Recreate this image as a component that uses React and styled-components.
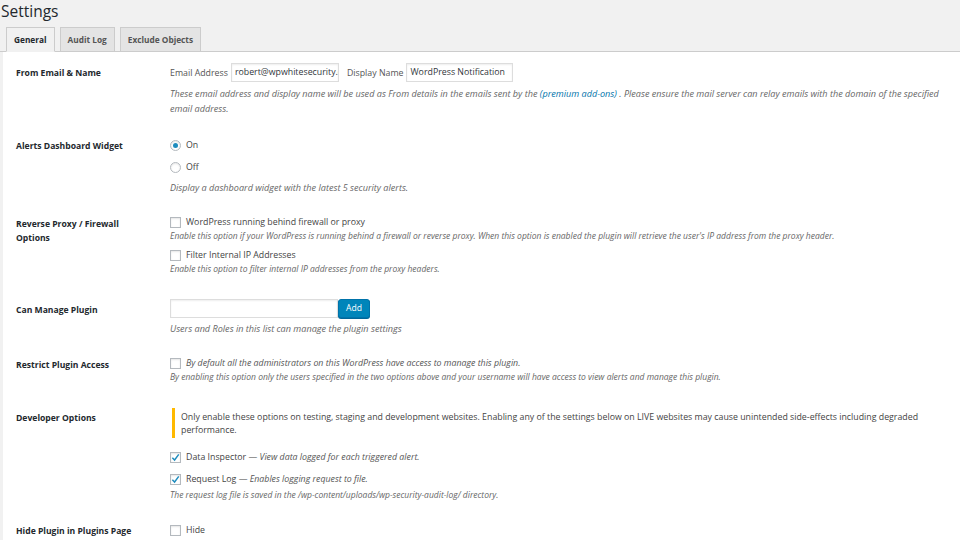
import React from 'react';
import styled, { createGlobalStyle } from 'styled-components';

const GlobalStyle = createGlobalStyle`
    html, body {
        margin: 0;
        padding: 0;
        background: #f1f1f1;
        font-family: "Open Sans", "Noto Sans", sans-serif;
        color: #444;
        overflow: hidden;
    }
`;

const Page = styled.div`
    width: 960px;
    height: 540px;
    overflow: hidden;
`;

const Title = styled.h1`
    margin: 0;
    padding: 0 0 0 1px;
    font-size: 15.5px;
    font-weight: 400;
    line-height: 22px;
    color: #23282d;
`;

const TabBar = styled.div`
    display: flex;
    gap: 5px;
    margin-top: 5px;
    padding-left: 6px;
    border-bottom: 1px solid #ccc;
`;

const Tab = styled.div`
    padding: 0 7px;
    height: 23px;
    line-height: 24px;
    font-size: 8.3px;
    font-weight: 700;
    border: 1px solid #ccc;
    border-bottom: 1px solid ${p => (p.$active ? '#f1f1f1' : '#ccc')};
    margin-bottom: -1px;
    background: ${p => (p.$active ? '#f1f1f1' : '#e4e4e4')};
    color: ${p => (p.$active ? '#23282d' : '#555')};
`;

const Panel = styled.div`
    margin-left: 3px;
    background: #fff;
    padding: 0 10px 0 13px;
    min-height: 500px;
`;

const Row = styled.div`
    display: grid;
    grid-template-columns: 154px 1fr;
    padding-top: ${p => p.$top}px;
`;

const Label = styled.div`
    font-size: 8.6px;
    font-weight: 700;
    color: #23282d;
    line-height: 14px;
    padding-top: ${p => p.$pt || 0}px;
    padding-right: 20px;
`;

const Field = styled.div`
    font-size: 8.8px;
    color: #444;
    min-width: 0;
`;

const Inline = styled.div`
    display: flex;
    align-items: center;
`;

const FieldText = styled.span`
    color: #555;
    margin: 0 3px 0 ${p => p.$ml || 0}px;
`;

const Input = styled.div`
    box-sizing: border-box;
    width: ${p => p.$w}px;
    height: 19px;
    border: 1px solid #ddd;
    box-shadow: inset 0 1px 2px rgba(0, 0, 0, 0.07);
    padding: 0 3px;
    line-height: 17px;
    font-size: 8.8px;
    color: #32373c;
    white-space: nowrap;
    overflow: hidden;
    background: #fff;
`;

const Button = styled.div`
    box-sizing: border-box;
    height: 19px;
    padding: 0 7px;
    line-height: 17px;
    background: #0085ba;
    border: 1px solid #0073aa;
    border-radius: 3px;
    color: #fff;
    font-size: 8.6px;
    box-shadow: 0 1px 0 #006799;
`;

const Desc = styled.p`
    margin: ${p => p.$mt || 0}px 0 0;
    font-size: ${p => (p.$small ? 8.5 : 9.1)}px;
    line-height: ${p => (p.$small ? 13 : 15)}px;
    font-style: italic;
    color: #666;
`;

const Link = styled.span`
    color: #0073aa;
`;

const Option = styled.div`
    display: flex;
    align-items: center;
    gap: 5px;
    height: 14px;
    margin-top: ${p => p.$mt || 0}px;
    color: #444;
    white-space: nowrap;
`;

const Box = styled.span`
    box-sizing: border-box;
    width: 11px;
    height: 11px;
    border: 1px solid #b4b9be;
    box-shadow: inset 0 1px 2px rgba(0, 0, 0, 0.1);
    background: #fff;
    display: inline-flex;
    align-items: center;
    justify-content: center;
    border-radius: ${p => (p.$round ? '50%' : '0')};
    flex: none;
`;

const Dot = styled.span`
    width: 5px;
    height: 5px;
    border-radius: 50%;
    background: #1e8cbe;
`;

const Em = styled.em`
    color: #555;
`;

const Notice = styled.div`
    border-left: 3px solid #ffb900;
    margin-left: 2px;
    padding: 3px 0 1px 6px;
    line-height: 13px;
    font-size: 8.8px;
    color: #444;
`;

const Check = () => (
    <svg width="9" height="9" viewBox="0 0 10 10">
        <path d="M1.5 5.2 L4 7.8 L8.6 1.6" fill="none" stroke="#1e8cbe" strokeWidth="1.6" />
    </svg>
);

const Checkbox = ({ checked }) => <Box>{checked && <Check />}</Box>;
const Radio = ({ checked }) => <Box $round>{checked && <Dot />}</Box>;

const App = () => (
    <Page>
        <GlobalStyle />
        <Title>Settings</Title>
        <TabBar>
            <Tab $active>General</Tab>
            <Tab>Audit Log</Tab>
            <Tab>Exclude Objects</Tab>
        </TabBar>
        <Panel>
            <Row $top={11}>
                <Label $pt={3}>From Email &amp; Name</Label>
                <Field>
                    <Inline>
                        <FieldText>Email Address</FieldText>
                        <Input $w={108}>robert@wpwhitesecurity.com</Input>
                        <FieldText $ml={8}>Display Name</FieldText>
                        <Input $w={107}>WordPress Notification</Input>
                    </Inline>
                    <Desc $mt={4}>
                        These email address and display name will be used as From details in the emails sent by the <Link>(premium add-ons)</Link> . Please ensure the mail server can relay emails with the domain of the specified email address.
                    </Desc>
                </Field>
            </Row>
            <Row $top={22}>
                <Label $pt={1}>Alerts Dashboard Widget</Label>
                <Field>
                    <Option><Radio checked />On</Option>
                    <Option $mt={8}><Radio />Off</Option>
                    <Desc $mt={6}>Display a dashboard widget with the latest 5 security alerts.</Desc>
                </Field>
            </Row>
            <Row $top={20}>
                <Label $pt={2}>Reverse Proxy / Firewall Options</Label>
                <Field>
                    <Option><Checkbox />WordPress running behind firewall or proxy</Option>
                    <Desc $small>Enable this option if your WordPress is running behind a firewall or reverse proxy. When this option is enabled the plugin will retrieve the user's IP address from the proxy header.</Desc>
                    <Option $mt={6}><Checkbox />Filter Internal IP Addresses</Option>
                    <Desc $small>Enable this option to filter internal IP addresses from the proxy headers.</Desc>
                </Field>
            </Row>
            <Row $top={24}>
                <Label $pt={4}>Can Manage Plugin</Label>
                <Field>
                    <Inline>
                        <Input $w={168} />
                        <Button>Add</Button>
                    </Inline>
                    <Desc $mt={3}>Users and Roles in this list can manage the plugin settings</Desc>
                </Field>
            </Row>
            <Row $top={20}>
                <Label $pt={2}>Restrict Plugin Access</Label>
                <Field>
                    <Option><Checkbox /><Em>By default all the administrators on this WordPress have access to manage this plugin.</Em></Option>
                    <Desc $small>By enabling this option only the users specified in the two options above and your username will have access to view alerts and manage this plugin.</Desc>
                </Field>
            </Row>
            <Row $top={25}>
                <Label $pt={3}>Developer Options</Label>
                <Field>
                    <Notice>Only enable these options on testing, staging and development websites. Enabling any of the settings below on LIVE websites may cause unintended side-effects including degraded performance.</Notice>
                    <Option $mt={12}><Checkbox checked /><span>Data Inspector — <Em>View data logged for each triggered alert.</Em></span></Option>
                    <Option $mt={8}><Checkbox checked /><span>Request Log — <Em>Enables logging request to file.</Em></span></Option>
                    <Desc $small $mt={2}>The request log file is saved in the /wp-content/uploads/wp-security-audit-log/ directory.</Desc>
                </Field>
            </Row>
            <Row $top={22}>
                <Label $pt={1}>Hide Plugin in Plugins Page</Label>
                <Field>
                    <Option><Checkbox />Hide</Option>
                </Field>
            </Row>
        </Panel>
    </Page>
);

export default App;
